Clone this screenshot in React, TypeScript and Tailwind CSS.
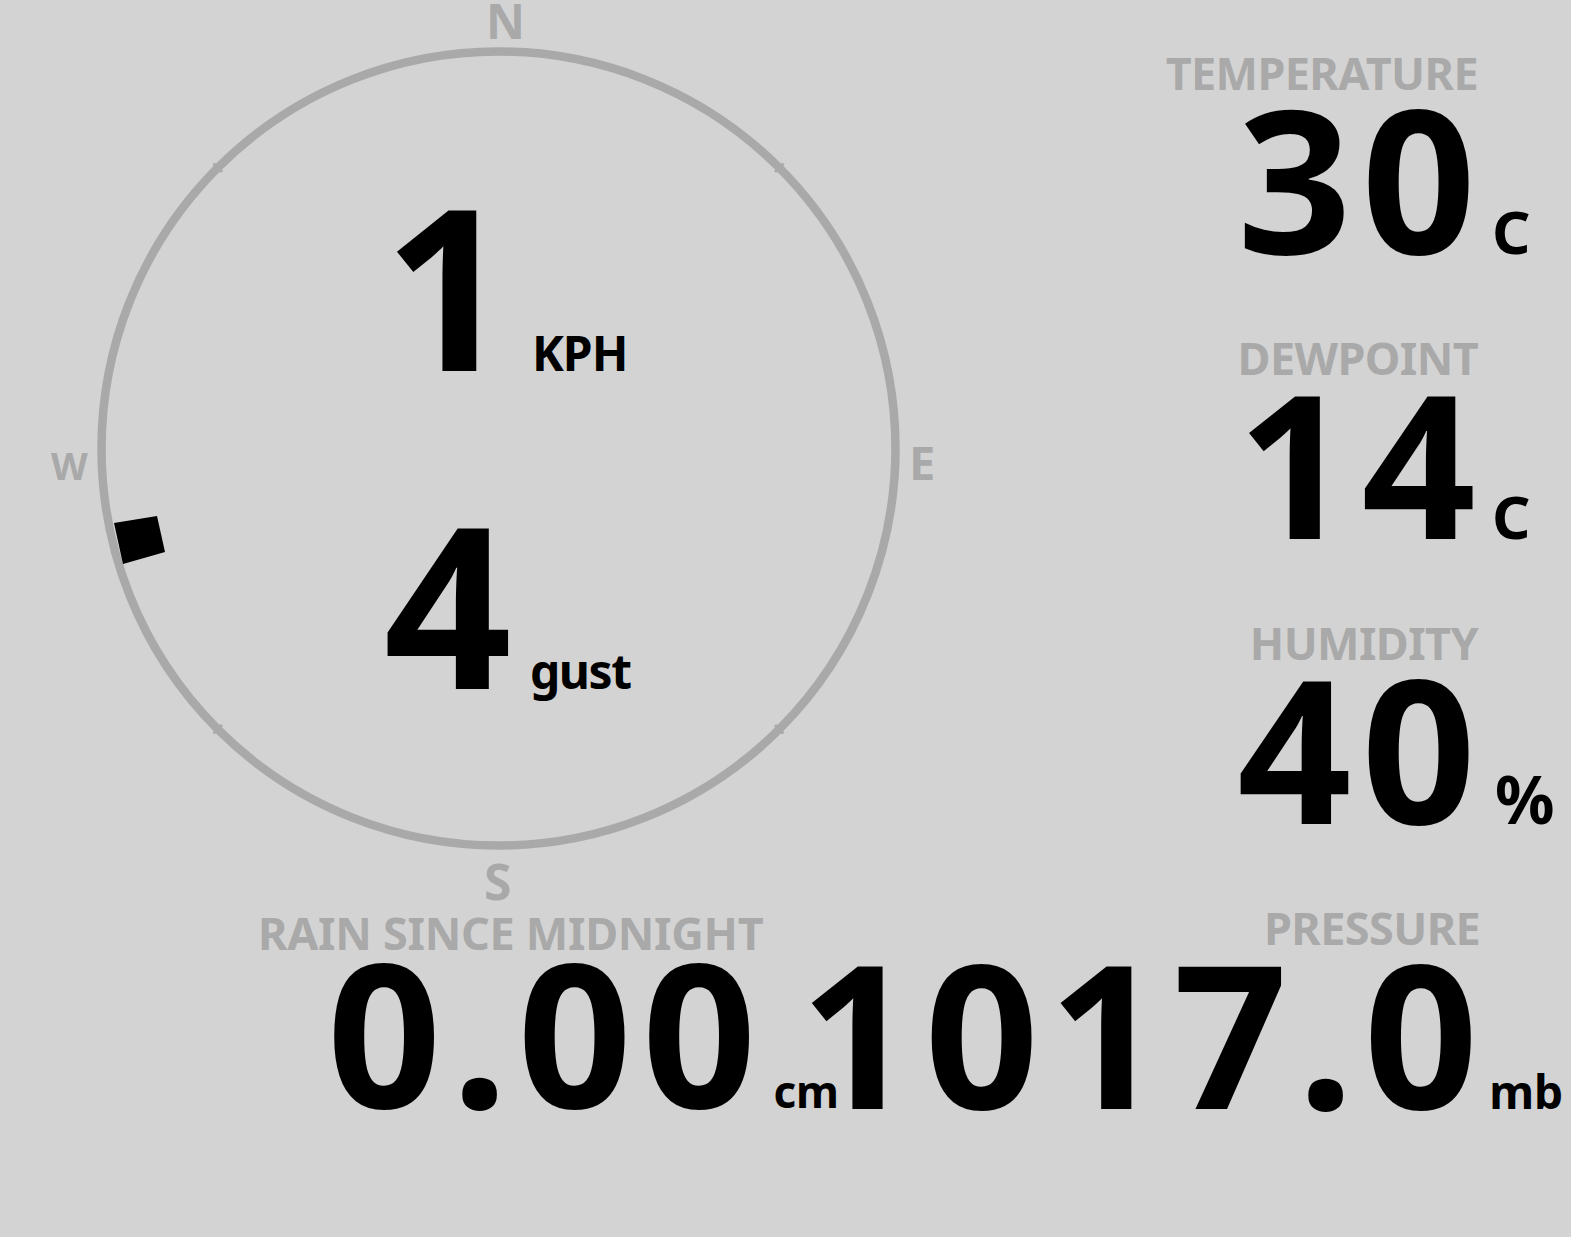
import React from "react";

const FONT = { fontFamily: '"Noto Sans", "Open Sans", sans-serif' };

function Stat({ label, value, unit, unitClass, unitPad }: { label: string; value: string; unit: string; unitClass: string; unitPad: string }) {
  return (
    <div className="flex flex-col items-end">
      <div className="mr-[-5px] text-[45px] leading-[45px] font-bold tracking-[-0.6px] text-[#a9a9a9]">{label}</div>
      <div className="mt-[2px] mr-[-98px] flex items-baseline">
        <span className="text-[200px] leading-[160px] font-bold tracking-[10px] mr-[-13px]">{value}</span>
        <span className={`w-[98px] font-bold leading-[20px] ${unitPad} ${unitClass}`}>{unit}</span>
      </div>
    </div>
  );
}

function Compass() {
  const cx = 498.5;
  const cy = 448.5;
  const r = 397;
  const ticks = [45, 135, 225, 315].map((a) => {
    const rad = (a * Math.PI) / 180;
    const x1 = cx + Math.sin(rad) * (r - 6);
    const y1 = cy - Math.cos(rad) * (r - 6);
    const x2 = cx + Math.sin(rad) * (r + 6);
    const y2 = cy - Math.cos(rad) * (r + 6);
    return { x1, y1, x2, y2 };
  });
  return (
    <div className="relative w-[1000px] h-[905px] shrink-0">
      <svg className="absolute inset-0" width="1000" height="905" viewBox="0 0 1000 905">
        <circle cx={cx} cy={cy} r={r} fill="none" stroke="#a9a9a9" strokeWidth="8.5" />
        {ticks.map((t, i) => (
          <line key={i} x1={t.x1} y1={t.y1} x2={t.x2} y2={t.y2} stroke="#a9a9a9" strokeWidth="3" />
        ))}
        <polygon points="114,523 157,516 165,552 123,564" fill="#000" />
      </svg>
      <div className="absolute left-[486px] top-[1px] text-[48px] leading-[40px] font-bold text-[#a9a9a9]">N</div>
      <div className="absolute left-[909px] top-[442px] text-[47px] leading-[40px] font-bold text-[#a9a9a9]">E</div>
      <div className="absolute left-[484px] top-[861px] text-[50px] leading-[40px] font-bold text-[#a9a9a9]">S</div>
      <div className="absolute left-[51px] top-[445px] text-[38px] leading-[40px] font-bold text-[#a9a9a9]">W</div>
      <div className="relative flex flex-col pt-[173px] gap-[94px]">
        <div className="flex items-baseline">
          <span className="w-[512px] text-right text-[224px] leading-none font-bold">1</span>
          <span className="pl-[20px] text-[48px] leading-[20px] font-bold tracking-[-1px]">KPH</span>
        </div>
        <div className="flex items-baseline">
          <span className="w-[512px] text-right text-[224px] leading-none font-bold">4</span>
          <span className="pl-[18px] text-[48px] leading-[20px] font-bold tracking-[-1.5px]">gust</span>
        </div>
      </div>
    </div>
  );
}

export default function App() {
  return (
    <div className="w-full h-[1237px] overflow-hidden bg-[#d3d3d3] text-black" style={FONT}>
      <div className="flex h-[905px]">
        <Compass />
        <div className="flex-1 flex flex-col items-end pr-[98px] pt-[50px] gap-[78px]">
          <Stat label="TEMPERATURE" value="30" unit="C" unitClass="text-[60px]" unitPad="pl-[19px]" />
          <Stat label="DEWPOINT" value="14" unit="C" unitClass="text-[60px]" unitPad="pl-[19px]" />
          <Stat label="HUMIDITY" value="40" unit="%" unitClass="text-[66px]" unitPad="pl-[22px]" />
        </div>
      </div>
      <div className="flex">
        <div className="w-[800px] shrink-0 flex flex-col items-start pl-[258px] pt-[5px]">
          <div className="text-[45px] leading-[45px] font-bold tracking-[-0.3px] text-[#a9a9a9]">RAIN SINCE MIDNIGHT</div>
          <div className="mt-[-4px] ml-[69px] flex items-baseline">
            <span className="text-[200px] leading-[160px] font-bold tracking-[10px]">0.00</span>
            <span className="pl-[7px] text-[44px] leading-[20px] font-bold">cm</span>
          </div>
        </div>
        <div className="flex-1">
          <div className="flex flex-col items-end pr-[98px]">
            <Stat label="PRESSURE" value="1017.0" unit="mb" unitClass="text-[46px]" unitPad="pl-[14px]" />
          </div>
        </div>
      </div>
    </div>
  );
}
